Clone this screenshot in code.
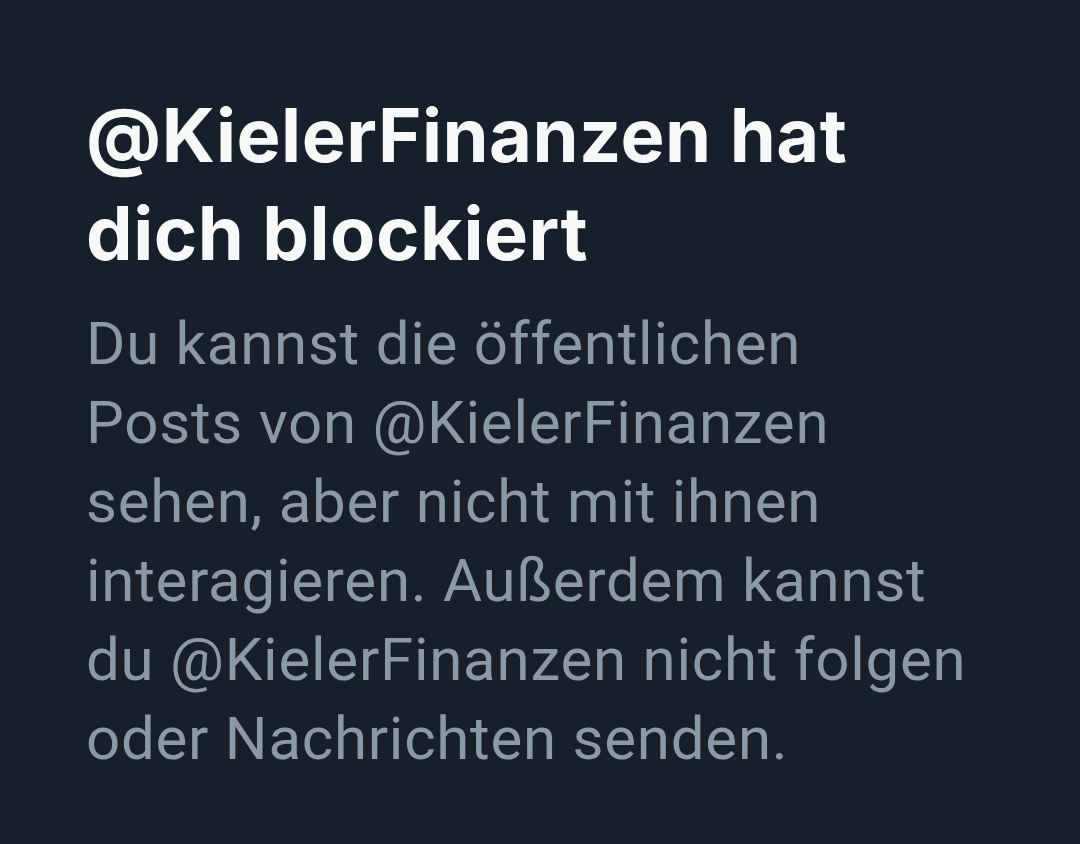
export default function App() {
    return (
        <div className="w-[1080px] h-[844px] bg-[#161f2a] overflow-hidden">
            <div className="pl-[86px] pr-[40px] pt-[86px]">
                <h1 className="text-[74px] leading-[98px] font-bold text-[#f7f9f9] tracking-[0.5px]" style={{ fontFamily: 'Inter, Roboto, sans-serif' }}>
                    @KielerFinanzen hat
                    <br />
                    dich blockiert
                </h1>
                <p className="mt-[22px] text-[60px] leading-[79px] text-[#8b98a5] tracking-[0.75px]" style={{ fontFamily: 'Roboto, "Noto Sans", sans-serif' }}>
                    Du kannst die öffentlichen
                    <br />
                    Posts von @KielerFinanzen
                    <br />
                    sehen, aber nicht mit ihnen
                    <br />
                    interagieren. Außerdem kannst
                    <br />
                    du @KielerFinanzen nicht folgen
                    <br />
                    oder Nachrichten senden.
                </p>
            </div>
        </div>
    )
}
